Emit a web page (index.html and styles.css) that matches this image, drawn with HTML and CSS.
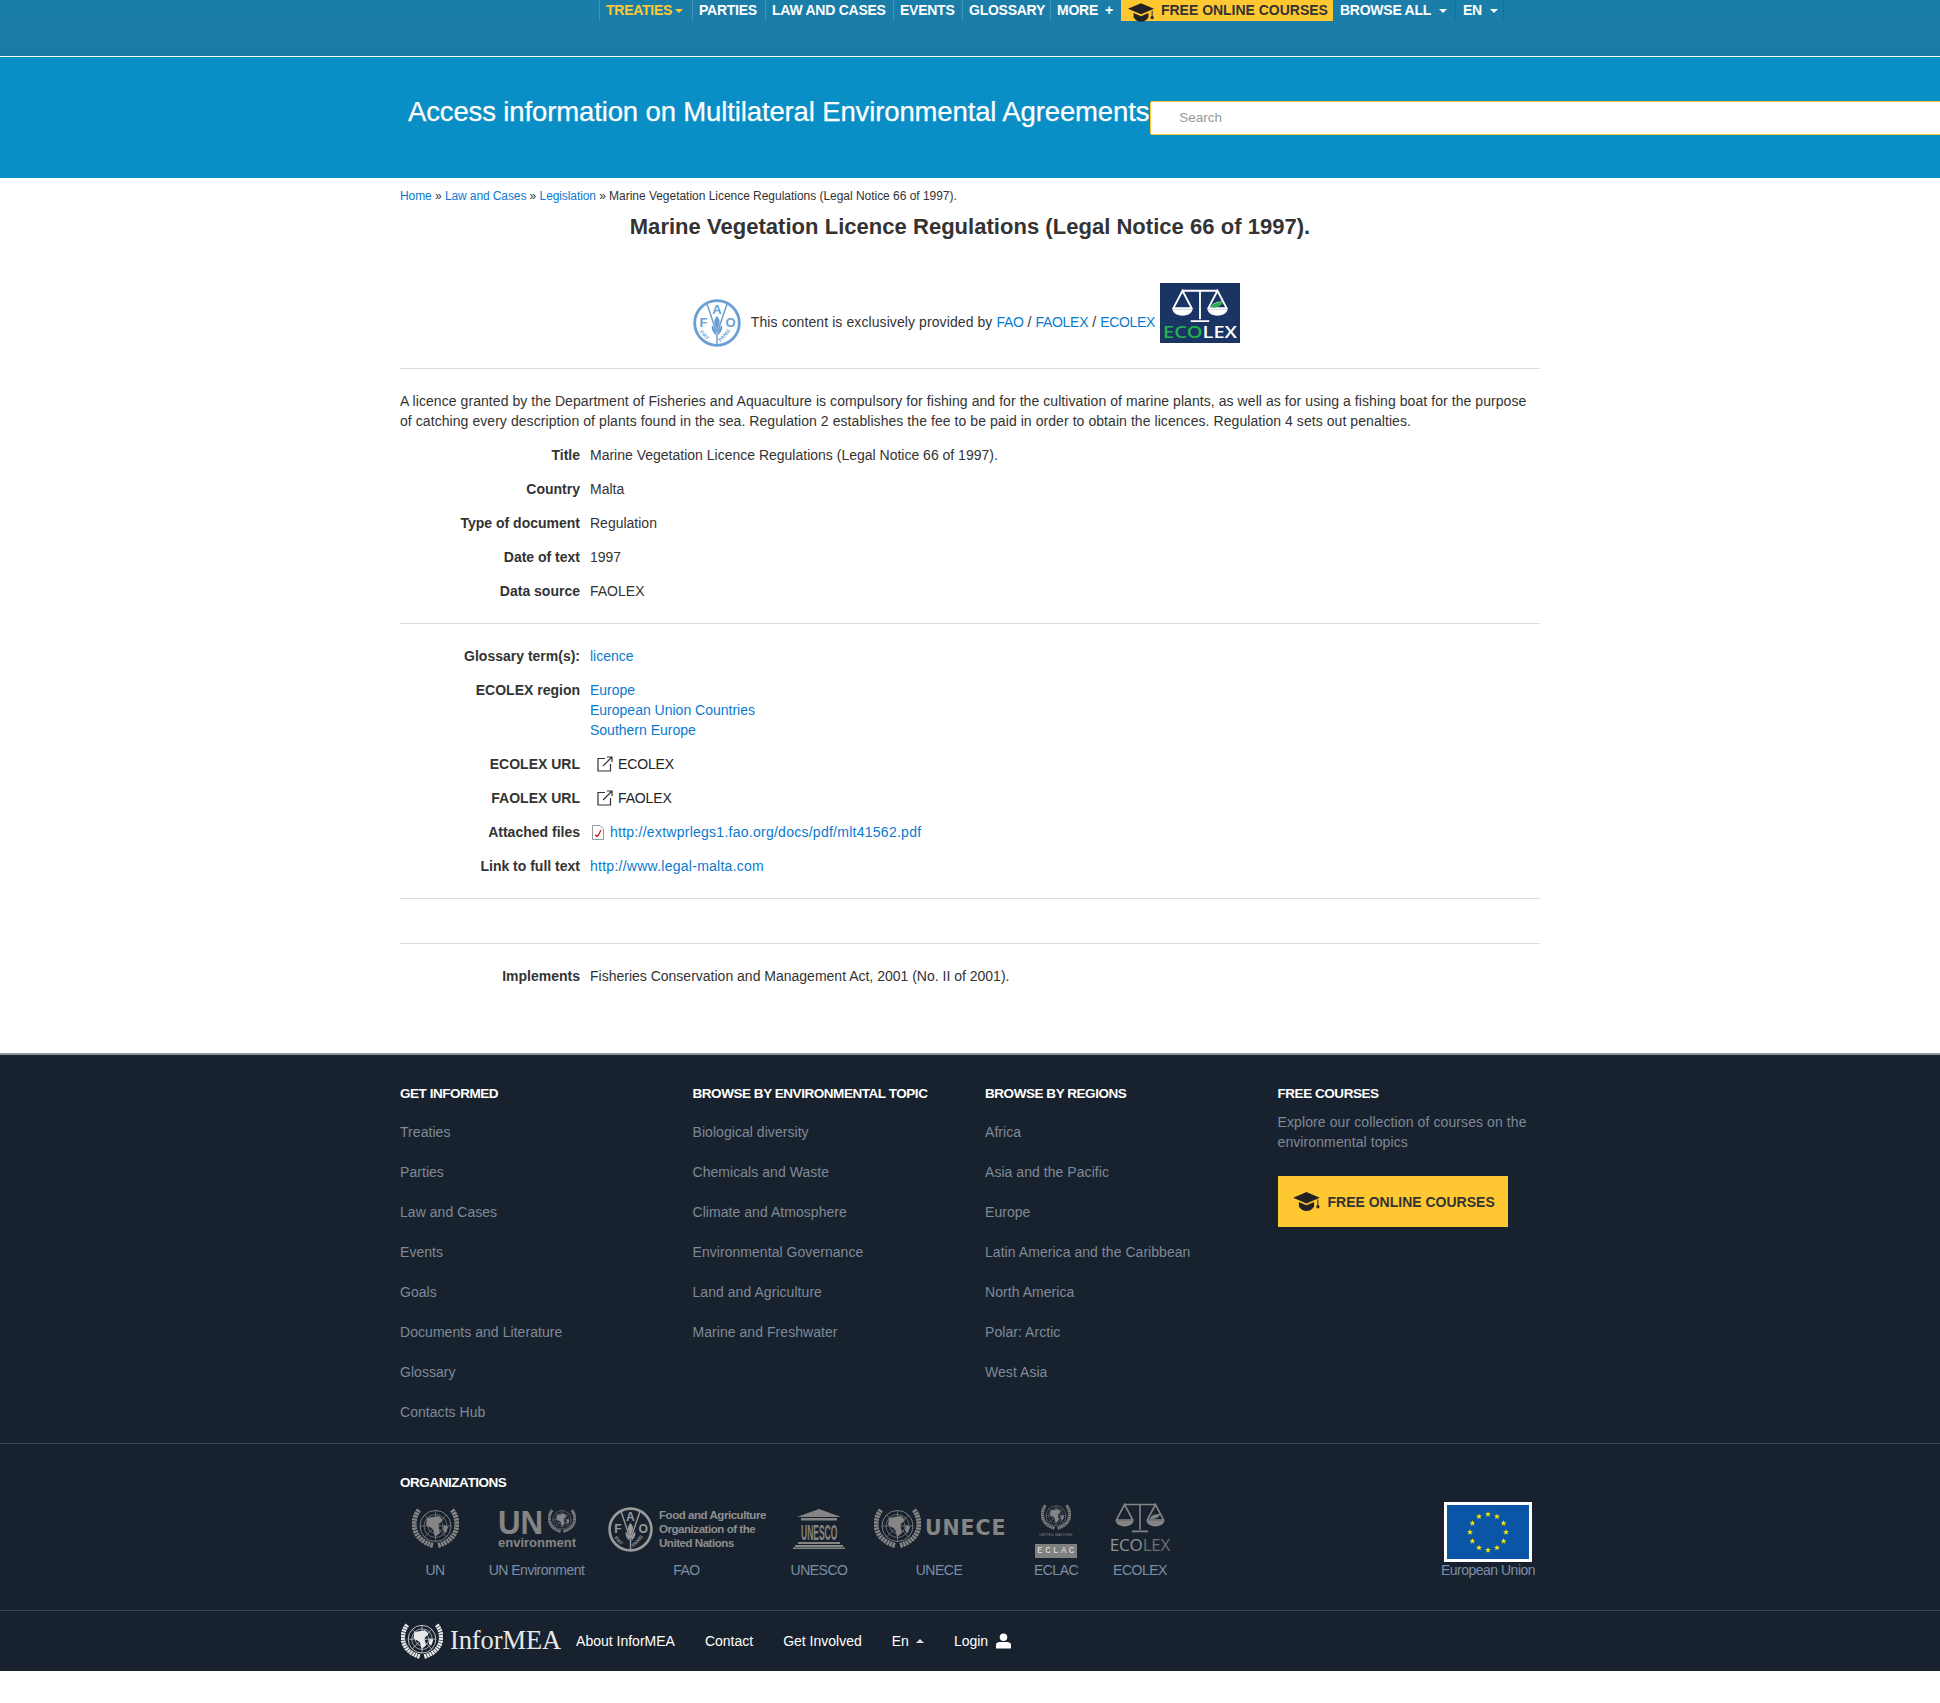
FILE: index.html
```html
<!DOCTYPE html>
<html lang="en">
<head>
<meta charset="utf-8">
<title>Marine Vegetation Licence Regulations (Legal Notice 66 of 1997).</title>
<link rel="stylesheet" href="styles.css">
</head>
<body>
<svg class="defs" width="0" height="0" aria-hidden="true">
  <defs>
    <symbol id="cap" viewBox="0 0 28 20">
      <path d="M14 0 L28 6 L14 12 L0 6 Z"/>
      <path d="M6 10.5 L14 14 L22 10.5 V15.5 C20 18.5 17 20 14 20 C11 20 8 18.5 6 15.5 Z"/>
      <path d="M25.5 8 h1 v6 h1 v3 h-3 v-3 h1 Z"/>
    </symbol>
    <symbol id="ext" viewBox="0 0 16 16">
      <path d="M8 2.5 H1 V15 H13.5 V8" fill="none" stroke="#333" stroke-width="1.2"/>
      <path d="M6 10 L15 1 M10 1 H15 V6" fill="none" stroke="#333" stroke-width="1.2"/>
    </symbol>
    <symbol id="un" viewBox="0 0 47 40">
      <g fill="none" stroke="currentColor">
        <circle cx="23.5" cy="18" r="15.5" stroke-width=".9"/>
        <circle cx="23.5" cy="18" r="11.5" stroke-width=".7"/>
        <circle cx="23.5" cy="18" r="7.5" stroke-width=".7"/>
        <circle cx="23.5" cy="18" r="3.5" stroke-width=".7"/>
        <path d="M8 18 H39 M23.5 2.5 V33.5 M12.5 7 L34.5 29 M34.5 7 L12.5 29" stroke-width=".7"/>
        <path d="M7 2 C-1 12 -1 31 21 37.5" stroke-width="5" stroke-dasharray="2.4 .7"/>
        <path d="M40 2 C48 12 48 31 26 37.5" stroke-width="5" stroke-dasharray="2.4 .7"/>
      </g>
      <path fill="currentColor" d="M15 10 L27 8 L31 12 L26 17 L28 25 L23 29 L21 21 L14 17 Z M32 17 L36 19 L34 25 L31 23 Z"/>
    </symbol>
    <symbol id="faomark" viewBox="0 0 48 48">
      <circle cx="24" cy="24" r="22.3" fill="none" stroke="currentColor" stroke-width="2.8"/>
      <g fill="none" stroke="currentColor" stroke-width="1.5">
        <path d="M14 5 L23.5 33 M34 5 L24.5 33"/>
        <path d="M24 26 V45"/>
      </g>
      <path fill="currentColor" d="M24 17 C27 20 28 24 24 30 C20 24 21 20 24 17 Z M19 26 C21 28 23 31 23 36 C20 34 18 30 19 26 Z M29 26 C27 28 25 31 25 36 C28 34 30 30 29 26 Z"/>
      <text x="24" y="15" class="fao-l">A</text>
      <text x="10.5" y="28" class="fao-l">F</text>
      <text x="37.5" y="28" class="fao-l">O</text>
      <text x="6.5" y="33" class="fao-s" transform="rotate(48 6.5 33)">FIAT</text>
      <text x="27.5" y="43" class="fao-s" transform="rotate(-48 27.5 43)">PANIS</text>
    </symbol>
    <symbol id="scale" viewBox="0 0 64 38">
      <g fill="none" stroke="currentColor" stroke-width="2">
        <path d="M13 3 H51 M32 3 V34 M22 36 H42"/>
        <path d="M13 3 L3 22 H23 Z M51 3 L41 22 H61 Z"/>
      </g>
      <path fill="currentColor" d="M2 23 H24 C23 28 18 30 13 30 C8 30 3 28 2 23 Z M40 23 H62 C61 28 56 30 51 30 C46 30 41 28 40 23 Z"/>
      <path fill="currentColor" d="M44 20.5 C46 16 51 15 57 14.5 C56 19 50 21.500 44 20.5 Z"/>
    </symbol>
    <symbol id="star" viewBox="0 0 10 10">
      <path d="M5 0 L6.2 3.6 H10 L7 5.9 L8.1 9.6 L5 7.4 L1.9 9.6 L3 5.9 L0 3.6 H3.8 Z" fill="#ffec00"/>
    </symbol>
  </defs>
</svg>

<header class="top">
  <nav class="nav">
    <a class="nav-item is-active n-treaties">TREATIES<span class="caret caret-near"></span></a>
    <a class="nav-item n-parties">PARTIES</a>
    <a class="nav-item n-law">LAW AND CASES</a>
    <a class="nav-item n-events">EVENTS</a>
    <a class="nav-item n-gloss">GLOSSARY</a>
    <a class="nav-item n-more">MORE<span class="plus">+</span></a>
    <a class="nav-courses"><svg class="cap-nav"><use href="#cap"/></svg>FREE ONLINE COURSES</a>
    <a class="nav-item n-browse">BROWSE ALL<span class="caret"></span></a>
    <a class="nav-item n-lang">EN<span class="caret"></span></a>
  </nav>
</header>

<section class="hero">
  <h2 class="hero-title">Access information on Multilateral Environmental Agreements</h2>
  <div class="search"><span class="search-text">Search</span></div>
</section>

<main class="container">
  <div class="crumbs"><a>Home</a> » <a>Law and Cases</a> » <a>Legislation</a> » Marine Vegetation Licence Regulations (Legal Notice 66 of 1997).</div>
  <h1 class="title">Marine Vegetation Licence Regulations (Legal Notice 66 of 1997).</h1>

  <div class="provider">
    <svg class="fao-blue"><use href="#faomark"/></svg>
    <span class="provider-text">This content is exclusively provided by <a>FAO</a> / <a>FAOLEX</a> / <a>ECOLEX</a></span>
    <svg class="ecolex-badge" viewBox="0 0 80 60">
      <rect width="80" height="60" fill="#1a3563"/>
      <svg x="10" y="5" width="60" height="35" color="#ffffff"><use href="#scale"/></svg>
      <path transform="translate(10.500 5.500) scale(.921)" d="M44 20.5 C46 16 51 15 57 14.5 C56 19 50 21.500 44 20.5 Z" fill="#22b14c"/>
      <text x="3" y="55" class="badge-text" textLength="74" lengthAdjust="spacingAndGlyphs"><tspan fill="#22b14c">ECO</tspan><tspan fill="#ffffff">LEX</tspan></text>
    </svg>
  </div>
  <hr class="rule rule-provider">

  <p class="summary">A licence granted by the Department of Fisheries and Aquaculture is compulsory for fishing and for the cultivation of marine plants, as well as for using a fishing boat for the purpose of catching every description of plants found in the sea. Regulation 2 establishes the fee to be paid in order to obtain the licences. Regulation 4 sets out penalties.</p>

  <dl class="fields">
    <dt>Title</dt><dd>Marine Vegetation Licence Regulations (Legal Notice 66 of 1997).</dd>
    <dt>Country</dt><dd>Malta</dd>
    <dt>Type of document</dt><dd>Regulation</dd>
    <dt>Date of text</dt><dd>1997</dd>
    <dt>Data source</dt><dd>FAOLEX</dd>
  </dl>
  <hr class="rule">
  <dl class="fields">
    <dt>Glossary term(s):</dt><dd><a>licence</a></dd>
    <dt>ECOLEX region</dt><dd><a>Europe</a><br><a>European Union Countries</a><br><a>Southern Europe</a></dd>
    <dt>ECOLEX URL</dt><dd class="ext-row"><svg class="ext"><use href="#ext"/></svg>ECOLEX</dd>
    <dt>FAOLEX URL</dt><dd class="ext-row"><svg class="ext"><use href="#ext"/></svg>FAOLEX</dd>
    <dt>Attached files</dt><dd class="file-row">
      <svg class="pdf" viewBox="0 0 12 15"><path d="M.5 .5 H8 L11.5 4 V14.500 H.5 Z" fill="#fff" stroke="#999"/><path d="M3 10 L5 12 L9 5 L6.5 10.500 Z" fill="#e02020" stroke="#e02020"/></svg>
      <a class="url">http://extwprlegs1.fao.org/docs/pdf/mlt41562.pdf</a></dd>
    <dt>Link to full text</dt><dd><a class="url">http://www.legal-malta.com</a></dd>
  </dl>
  <hr class="rule">
  <hr class="rule rule-blank">
  <dl class="fields fields-last">
    <dt>Implements</dt><dd>Fisheries Conservation and Management Act, 2001 (No. II of 2001).</dd>
  </dl>
</main>

<footer class="footer">
  <div class="foot-cols">
    <div class="foot-col">
      <h4 class="foot-h">GET INFORMED</h4>
      <ul class="foot-list">
        <li>Treaties</li><li>Parties</li><li>Law and Cases</li><li>Events</li><li>Goals</li><li>Documents and Literature</li><li>Glossary</li><li>Contacts Hub</li>
      </ul>
    </div>
    <div class="foot-col">
      <h4 class="foot-h">BROWSE BY ENVIRONMENTAL TOPIC</h4>
      <ul class="foot-list">
        <li>Biological diversity</li><li>Chemicals and Waste</li><li>Climate and Atmosphere</li><li>Environmental Governance</li><li>Land and Agriculture</li><li>Marine and Freshwater</li>
      </ul>
    </div>
    <div class="foot-col">
      <h4 class="foot-h">BROWSE BY REGIONS</h4>
      <ul class="foot-list">
        <li>Africa</li><li>Asia and the Pacific</li><li>Europe</li><li>Latin America and the Caribbean</li><li>North America</li><li>Polar: Arctic</li><li>West Asia</li>
      </ul>
    </div>
    <div class="foot-col">
      <h4 class="foot-h">FREE COURSES</h4>
      <p class="foot-p">Explore our collection of courses on the environmental topics</p>
      <a class="foot-btn"><svg class="cap-btn"><use href="#cap"/></svg>FREE ONLINE COURSES</a>
    </div>
  </div>

  <div class="orgs">
    <div class="orgs-in">
      <h4 class="foot-h">ORGANIZATIONS</h4>
      <div class="org-row">
        <div class="org org-un">
          <div class="org-logo"><svg class="l-un"><use href="#un"/></svg></div><span>UN</span>
        </div>
        <div class="org org-env">
          <div class="org-logo">
            <svg class="l-env" viewBox="0 -7 78 48">
              <text class="env-un" transform="translate(0 25) scale(.92 1)">UN</text>
              <svg x="50" y="0" width="28" height="24" color="#858585"><use href="#un"/></svg>
              <text x="0" y="38" class="env-t">environment</text>
            </svg>
          </div><span>UN Environment</span>
        </div>
        <div class="org org-fao">
          <div class="org-logo l-fao">
            <svg class="l-fao-mark"><use href="#faomark"/></svg>
            <div class="fao-words">Food and Agriculture<br>Organization of the<br>United Nations</div>
          </div><span>FAO</span>
        </div>
        <div class="org org-unesco">
          <div class="org-logo">
            <svg class="l-unesco" viewBox="0 0 52 40">
              <path d="M26 0 L48 8 H4 Z M8 9 H44 V11.500 H8 Z" fill="#858585"/>
              <text class="unesco-t" transform="translate(8 31) scale(.85 2.200)">UNESCO</text>
              <path d="M5 33 H47 V35 H5 Z M2 36 H50 V38 H2 Z M0 38.500 H52 V40 H0 Z" fill="#858585"/>
            </svg>
          </div><span>UNESCO</span>
        </div>
        <div class="org org-unece">
          <div class="org-logo l-unece">
            <svg class="l-unece-mark"><use href="#un"/></svg>
            <b class="unece-t">UNECE</b>
          </div><span>UNECE</span>
        </div>
        <div class="org org-eclac">
          <div class="org-logo l-eclac">
            <svg class="l-eclac-mark"><use href="#un"/></svg>
            <i class="eclac-line">UNITED NATIONS</i>
            <b class="eclac-box">ECLAC</b>
          </div><span>ECLAC</span>
        </div>
        <div class="org org-ecolex">
          <div class="org-logo l-ecolex">
            <svg class="l-ecolex-mark"><use href="#scale"/></svg>
            <b class="ecolex-word">ECO<em>LEX</em></b>
          </div><span>ECOLEX</span>
        </div>
        <div class="org org-eu">
          <div class="org-logo">
            <svg class="l-eu" viewBox="0 0 88 60">
              <rect width="88" height="60" fill="#fff"/>
              <rect x="3" y="3" width="82" height="54" fill="#0a55a5"/>
              <use href="#star" x="41" y="9" width="6" height="6"/>
              <use href="#star" x="50" y="11.400" width="6" height="6"/>
              <use href="#star" x="56.600" y="18" width="6" height="6"/>
              <use href="#star" x="59" y="27" width="6" height="6"/>
              <use href="#star" x="56.600" y="36" width="6" height="6"/>
              <use href="#star" x="50" y="42.600" width="6" height="6"/>
              <use href="#star" x="41" y="45" width="6" height="6"/>
              <use href="#star" x="32" y="42.600" width="6" height="6"/>
              <use href="#star" x="25.400" y="36" width="6" height="6"/>
              <use href="#star" x="23" y="27" width="6" height="6"/>
              <use href="#star" x="25.400" y="18" width="6" height="6"/>
              <use href="#star" x="32" y="11.400" width="6" height="6"/>
            </svg>
          </div><span>European Union</span>
        </div>
      </div>
    </div>
  </div>

  <div class="foot-bar">
    <div class="foot-bar-in">
      <svg class="brand-mark"><use href="#un"/></svg>
      <span class="brand">InforMEA</span>
      <a class="bar-link">About InforMEA</a>
      <a class="bar-link">Contact</a>
      <a class="bar-link">Get Involved</a>
      <a class="bar-link">En<span class="caret-up"></span></a>
      <a class="bar-link bar-login">Login
        <svg class="user" viewBox="0 0 16 16"><circle cx="8" cy="4" r="4" fill="#fff"/><path d="M0 16 V12 C0 10 2 9 4 9 H12 C14 9 16 10 16 12 V16 Z" fill="#fff"/></svg>
      </a>
    </div>
  </div>
</footer>
</body>
</html>
```

FILE: styles.css
```css
* { box-sizing: border-box; }
html, body { margin: 0; padding: 0; }
body {
  font-family: "Liberation Sans", Arial, sans-serif;
  font-size: 14px;
  line-height: 20px;
  color: #333;
  background: #fff;
  min-height: 1703px;
  overflow-x: hidden;
}
a { color: #0a7ad0; text-decoration: none; }
.defs { position: absolute; }

/* top nav */
.top {
  height: 57px;
  background: linear-gradient(#1a7ea9, #1c7aa6);
  border-bottom: 1px solid #fff;
}
.nav {
  display: flex;
  align-items: flex-start;
  padding-left: 599px;
  height: 21px;
  font-size: 14px;
  font-weight: 700;
  letter-spacing: -.25px;
}
.nav-item {
  display: flex;
  align-items: center;
  height: 20px;
  padding: 0 0 0 6px;
  color: #fff;
  border-left: 1px solid #3f93b8;
  flex: none;
}
.n-treaties { width: 93px; color: #ffc832; }
.n-parties { width: 73px; }
.n-law { width: 128px; }
.n-events { width: 69px; }
.n-gloss { width: 88px; }
.n-more { width: 71px; }
.n-browse { width: 122px; border-left: 0; padding-left: 7px; }
.n-lang { width: 49px; border-left-color: #156f98; border-right: 1px solid #156f98; padding-left: 7px; }
.caret {
  display: inline-block;
  width: 0; height: 0;
  margin-left: 8px;
  margin-top: 2px;
  border: 4.5px solid transparent;
  border-top-color: #fff;
  border-bottom: 0;
}
.caret-near { margin-left: 3px; border-top-color: #ffc832; }
.plus { margin-left: 7px; }
.nav-courses {
  display: flex;
  align-items: center;
  flex: none;
  width: 212px;
  height: 21px;
  padding: 0 0 1px 7px;
  background: #ffc832;
  color: #333;
  letter-spacing: -.02px;
}
.cap-nav { width: 26px; height: 19px; margin-right: 7px; fill: #222; margin-top: 4px; }

/* hero */
.hero {
  height: 121px;
  background: #0a8ec6;
  display: flex;
  align-items: flex-start;
  padding-left: 408px;
  overflow: hidden;
}
.hero-title {
  margin: 37px 0 0;
  font-size: 27.5px;
  line-height: 36px;
  font-weight: 400;
  color: #fff;
  letter-spacing: -.13px;
  white-space: nowrap;
  -webkit-text-stroke: .25px #fff;
}
.search {
  flex: 1;
  min-width: 800px;
  height: 34px;
  margin: 44px 0 0 1px;
  padding-left: 28px;
  background: #fff;
  border: 1px solid #ffc832;
  border-radius: 2px;
  color: #999;
  font-size: 13.5px;
  line-height: 32px;
}

/* body */
.container { width: 1140px; margin: 0 0 67px 400px; }
.crumbs { margin-top: 8px; font-size: 12px; line-height: 20px; letter-spacing: -.03px; }
.crumbs a { letter-spacing: -.1px; }
.title {
  margin: 6px 0 0;
  text-align: center;
  font-size: 22px;
  line-height: 30px;
  font-weight: 700;
  letter-spacing: .03px;
}
.provider {
  display: flex;
  justify-content: center;
  align-items: flex-start;
  margin-top: 41px;
  padding-right: 7px;
}
.fao-blue { width: 48px; height: 48px; margin-top: 16px; color: #6a9fd4; flex: none; }
.fao-l { font: 700 13px "Liberation Sans", sans-serif; text-anchor: middle; fill: currentColor; }
.fao-s { font: 700 5px "Liberation Sans", sans-serif; fill: currentColor; }
.provider-text { margin: 29px 5px 0 10px; letter-spacing: .09px; }
.provider-text a { letter-spacing: -.3px; }
.ecolex-badge { width: 80px; height: 60px; }
.badge-text { font: 600 17px "Open Sans", "Liberation Sans", sans-serif; }
.rule { border: 0; border-top: 1px solid #ddd; margin: 22px 0; height: 0; }
.rule-provider { margin-top: 21px; }
.rule-blank { margin-top: 44px; }
.summary { margin: 22px 0 14px; letter-spacing: .065px; }
.fields {
  display: grid;
  grid-template-columns: 180px 1fr;
  column-gap: 10px;
  row-gap: 14px;
  margin: 0;
}
.fields dt { text-align: right; font-weight: 700; }
.fields dd { margin: 0; }
.url { letter-spacing: .26px; }
.ext-row { display: flex; align-items: center; color: #222; padding-left: 7px; letter-spacing: -.15px; }
.ext { width: 16px; height: 16px; margin-right: 5px; }
.file-row { display: flex; align-items: center; padding-left: 2px; }
.pdf { width: 12px; height: 15px; margin-right: 6px; }

/* footer */
.footer { background: #18222e; height: 618px; border-top: 2px solid #8f94a2; color: #7f8998; }
.foot-cols {
  display: grid;
  grid-template-columns: repeat(4, 292.5px);
  padding: 29px 0 0 400px;
  height: 388px;
}
.foot-h { margin: 0; color: #fff; font-size: 13.5px; line-height: 20px; font-weight: 700; letter-spacing: -.45px; }
.foot-list { list-style: none; margin: 8px 0 0; padding: 0; }
.foot-list li { line-height: 40px; height: 40.05px; letter-spacing: .05px; }
.foot-p { margin: 8px 0 0; width: 262px; letter-spacing: .1px; }
.foot-btn {
  display: flex;
  align-items: center;
  width: 230px;
  height: 51px;
  margin-top: 24px;
  padding-left: 15px;
  background: #ffc832;
  color: #333;
  font-weight: 700;
}
.cap-btn { width: 27px; height: 19px; margin-right: 8px; fill: #222; }
.orgs { border-top: 1px solid #3b4552; padding: 29px 0 32px; height: 167px; }
.orgs-in { padding-left: 400px; }
.org-row {
  display: grid;
  grid-template-columns: 89px 119px 182px 84px 158px 78px 331px 94px;
  margin-top: 9px;
}
.org { display: flex; flex-direction: column; align-items: center; line-height: 16px; letter-spacing: -.5px; white-space: nowrap; color: #7b8ea8; }
.org-un { width: 70px; }
.org-env { width: 95px; }
.org-fao { width: 157px; }
.org-unesco { width: 58px; }
.org-unece { width: 130px; }
.org-eclac { width: 48px; }
.org-ecolex { width: 60px; }
.org-eu { width: 94px; }
.org-logo { height: 60px; display: flex; align-items: flex-start; justify-content: center; color: #858585; width: 100%; letter-spacing: 0; }
.l-un { width: 47px; height: 40px; margin-top: 6px; }
.l-env { width: 78px; height: 48px; margin-top: 0; flex: none; }
.env-un { font: 700 34px "Liberation Sans", sans-serif; fill: #858585; }
.env-t { font: 700 13px "Liberation Sans", sans-serif; fill: #858585; }
.unesco-t { font: 700 10px "Liberation Sans", sans-serif; fill: #858585; }
.l-fao { justify-content: flex-start; color: #9a9a9a; }
.l-fao-mark { width: 45px; height: 45px; margin-top: 5px; flex: none; }
.fao-words {
  margin: 6px 0 0 6px;
  font: 700 11.5px/14px "Liberation Sans", sans-serif;
  letter-spacing: -.45px;
  color: #8f8f8f;
  white-space: nowrap;
}
.l-unesco { width: 52px; height: 40px; margin-top: 7px; }
.l-unece { justify-content: flex-start; }
.l-unece-mark { width: 47px; height: 40px; margin-top: 6px; flex: none; }
.unece-t { margin: 13px 0 0 4px; line-height: 26px; color: #858585; letter-spacing: .9px; font-family: "DejaVu Sans", sans-serif; font-size: 20.5px; }
.l-eclac { flex-direction: column; align-items: center; justify-content: flex-start; }
.l-eclac-mark { width: 30px; height: 26px; margin-top: 2px; flex: none; }
.eclac-line { margin-top: 1px; font: normal 3.5px/8px "Liberation Sans", sans-serif; color: #8a8a8a; letter-spacing: .3px; }
.eclac-box {
  display: block;
  width: 42px;
  height: 14px;
  margin-top: 5px;
  padding-left: 2px;
  background: #808080;
  color: #e4e4e4;
  font: 400 9px/14px "Liberation Mono", monospace;
  letter-spacing: 2.5px;
  text-align: center;
}
.l-ecolex { flex-direction: column; align-items: center; justify-content: flex-start; }
.l-ecolex-mark { width: 52px; height: 31px; margin-top: 0; flex: none; color: #858585; }
.ecolex-word { font: 400 17px/18px "Open Sans", sans-serif; color: #949494; margin-top: 3px; letter-spacing: -.2px; }
.ecolex-word em { font-style: normal; color: #6b6f75; }
.l-eu { width: 88px; height: 60px; }
.foot-bar { border-top: 1px solid #3b4552; height: 61px; }
.foot-bar-in { display: flex; align-items: center; height: 60px; padding: 0 0 1px 401px; }
.brand-mark { width: 42px; height: 36px; color: #e8e8e8; flex: none; }
.brand { margin: 0 15px 2px 7px; font: 26.5px/34px "Liberation Serif", serif; color: #e8e8e8; letter-spacing: -.1px; }
.bar-link { color: #fff; margin-right: 30px; letter-spacing: 0; display: flex; align-items: center; }
.caret-up {
  display: inline-block;
  width: 0; height: 0;
  margin-left: 7px;
  border: 4px solid transparent;
  border-bottom-color: #ddd;
  border-top: 0;
}
.bar-login { margin-right: 0; }
.user { width: 15px; height: 16px; margin-left: 8px; }
```
